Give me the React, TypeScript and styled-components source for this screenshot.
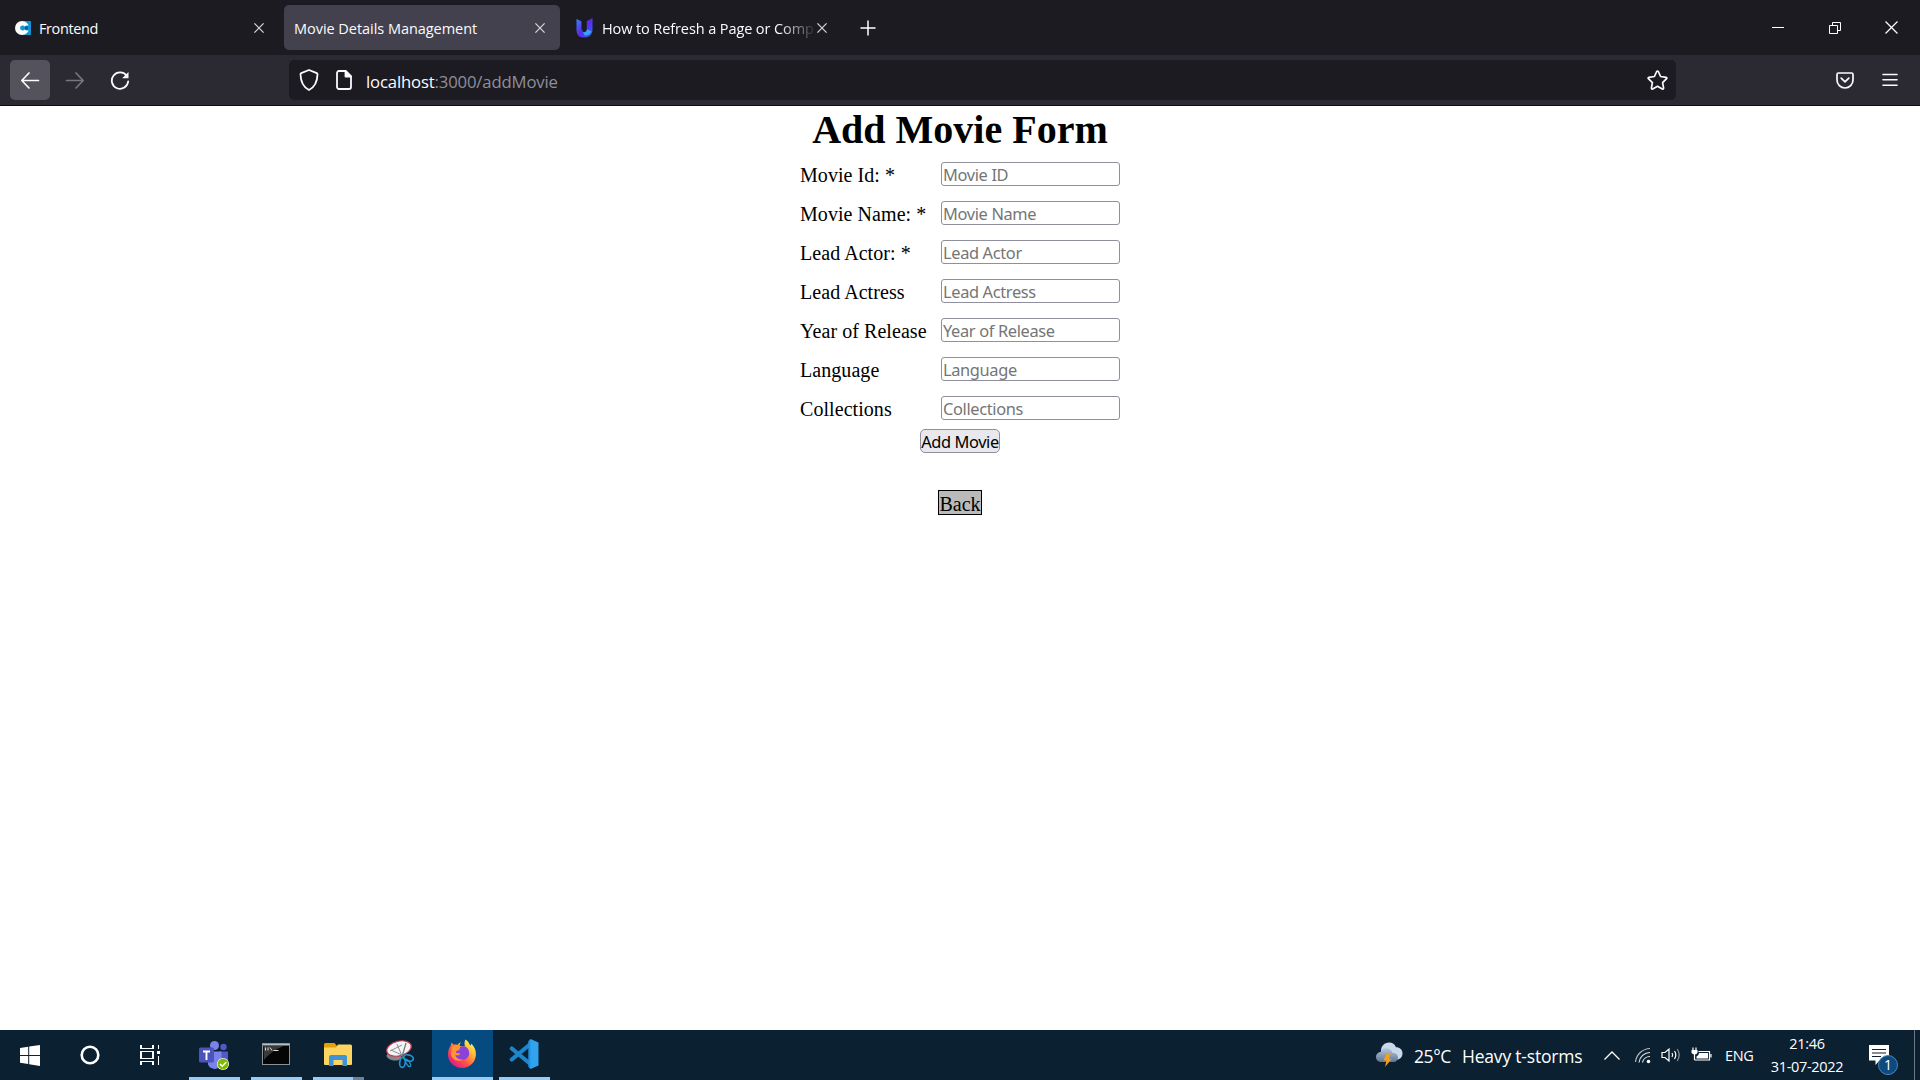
import React from 'react';
import styled, { createGlobalStyle } from 'styled-components';

const UI = `"Open Sans", "Noto Sans", sans-serif`;

const GlobalStyle = createGlobalStyle`
  *, *::before, *::after { box-sizing: border-box; }
  body { margin: 0; background: #fff; overflow: hidden; }
  svg { display: block; flex: none; }
`;

const Screen = styled.div`
  width: 1920px;
  height: 1080px;
  display: flex;
  flex-direction: column;
  overflow: hidden;
  background: #fff;
`;

/* ---------- browser chrome ---------- */

const TabStrip = styled.header`
  height: 55px;
  flex: none;
  display: flex;
  align-items: flex-start;
  gap: 8px;
  padding: 5px 0 0 8px;
  background: #1c1b22;
  color: #fbfbfe;
`;

const Tab = styled.div<{ $active?: boolean; $width: number; $left: number; $right: number }>`
  width: ${p => p.$width}px;
  height: 45px;
  flex: none;
  display: flex;
  align-items: center;
  padding: 0 ${p => p.$right}px 0 ${p => p.$left}px;
  border-radius: 5px;
  background: ${p => (p.$active ? '#42414d' : 'transparent')};
`;

const TabTitle = styled.span<{ $fade?: boolean; $gap?: number; $spacing: number }>`
  flex: 1;
  min-width: 0;
  margin-left: ${p => p.$gap ?? 0}px;
  padding-top: 3px;
  white-space: nowrap;
  font: 14.5px/24px ${UI};
  letter-spacing: ${p => p.$spacing}px;
  ${p => p.$fade && 'mask-image: linear-gradient(to left, transparent, #000 38px);'}
`;

const NewTab = styled.div`
  width: 40px;
  height: 45px;
  margin-left: 4px;
  display: grid;
  place-items: center;
`;

const WindowButtons = styled.div`
  margin-left: auto;
  height: 45px;
  display: grid;
  grid-template-columns: repeat(3, 57px);
  place-items: center;
`;

const NavBar = styled.nav`
  height: 51px;
  flex: none;
  display: flex;
  align-items: center;
  padding: 0 10px;
  background: #2b2a33;
  border-bottom: 1px solid #0c0c0d;
  color: #fbfbfe;
`;

const NavButton = styled.div<{ $raised?: boolean; $dim?: boolean }>`
  width: 40px;
  height: 40px;
  margin-right: 5px;
  display: grid;
  place-items: center;
  border-radius: 5px;
  background: ${p => (p.$raised ? '#53525d' : 'transparent')};
  color: ${p => (p.$dim ? '#77767f' : '#fbfbfe')};
`;

const AddressBar = styled.div`
  width: 1387px;
  height: 40px;
  margin-left: 144px;
  display: flex;
  align-items: center;
  padding: 0 8px 0 10px;
  border-radius: 5px;
  background: #1c1b22;
`;

const Url = styled.span`
  flex: 1;
  margin-left: 14px;
  padding-top: 3px;
  font: 16.7px/26px ${UI};
  letter-spacing: -0.15px;
  color: #fbfbfe;
`;

const UrlRest = styled.span`
  color: #8f8f9a;
`;

const NavTools = styled.div`
  margin-left: auto;
  display: flex;
  margin-right: -5px;
`;

/* ---------- page ---------- */

const Page = styled.main`
  flex: 1;
  display: flex;
  flex-direction: column;
  align-items: center;
  font: 20px/23px "Liberation Serif", "Times New Roman", serif;
  color: #000;
`;

const Heading = styled.h1`
  margin: 1px 0 9px;
  font-size: 40px;
  line-height: 45px;
  font-weight: 700;
`;

const Form = styled.form`
  display: flex;
  flex-direction: column;
  align-items: center;
`;

const Fields = styled.div`
  display: grid;
  grid-template-columns: 141px 179px;
  grid-auto-rows: 39px;
`;

const Label = styled.label`
  padding-top: 3px;
  letter-spacing: 0.06px;
`;

const Input = styled.input`
  width: 179px;
  height: 24px;
  margin: 1px 0 0;
  padding: 1px 1px 0;
  border: 1px solid #8f8f9d;
  border-radius: 3px;
  background: #fff;
  font: 16.4px/20px "Noto Sans", sans-serif;
  letter-spacing: -0.35px;
  outline: none;
  &::placeholder { color: #757575; opacity: 1; }
`;

const Submit = styled.button`
  width: 80px;
  height: 24px;
  margin: -5px 0 0;
  padding: 1px 0 0;
  border: 1px solid #8f8f9d;
  border-radius: 5px;
  background: #e9e9ed;
  color: #000;
  font: 16.4px/20px "Noto Sans", sans-serif;
  letter-spacing: -0.4px;
  white-space: nowrap;
`;

const BackLink = styled.a`
  width: 44px;
  height: 25px;
  margin-top: 37px;
  border: 1px solid #000;
  background: #bababa;
  text-align: center;
  line-height: 26px;
`;

/* ---------- taskbar ---------- */

const Taskbar = styled.footer`
  height: 50px;
  flex: none;
  display: flex;
  background: #0b2031;
  color: #fff;
  font: 15px/20px ${UI};
`;

const SystemItem = styled.div`
  width: 60px;
  display: grid;
  place-items: center;
`;

const Apps = styled.div`
  display: flex;
  margin-left: 3px;
`;

const AppItem = styled.div<{ $active?: boolean }>`
  width: 62px;
  display: flex;
  flex-direction: column;
  align-items: center;
  justify-content: space-between;
  padding-top: 8px;
  background: ${p => (p.$active ? 'linear-gradient(90deg, transparent 1px, #064b80 1px)' : 'transparent')};
`;

const Underline = styled.div<{ $kind: 'none' | 'open' | 'stacked' | 'active' }>`
  width: ${p => (p.$kind === 'active' ? 61 : 51)}px;
  height: 3px;
  align-self: ${p => (p.$kind === 'active' ? 'flex-end' : 'center')};
  background: ${p =>
    p.$kind === 'none'
      ? 'transparent'
      : p.$kind === 'stacked'
        ? 'linear-gradient(90deg, #9accf3 40px, #6b8398 40px)'
        : '#9accf3'};
`;

const Tray = styled.div`
  margin-left: auto;
  display: flex;
  align-items: center;
`;

const Weather = styled.div`
  display: flex;
  align-items: center;
  width: 228px;
  font-size: 17.5px;
  line-height: 24px;
  white-space: nowrap;
`;

const Temperature = styled.span`
  width: 48px;
  margin-left: 11px;
  padding-top: 2px;
  letter-spacing: -0.4px;
`;

const Conditions = styled.span`
  padding-top: 2px;
  letter-spacing: -0.2px;
`;

const TrayIcons = styled.div`
  display: flex;
  align-items: center;
  gap: 10px;
`;

const Overflow = styled.div`
  margin-right: 4px;
`;

const Lang = styled.span`
  width: 30px;
  margin-left: 13px;
  padding-top: 1px;
  font-size: 14.5px;
  letter-spacing: -0.3px;
`;

const Clock = styled.div`
  width: 78px;
  margin-left: 13px;
  margin-right: 1px;
  display: flex;
  flex-direction: column;
  align-items: center;
  gap: 3px;
  font-size: 14.5px;
  letter-spacing: -0.3px;
  white-space: nowrap;
`;

const Notifications = styled.div`
  position: relative;
  margin-left: 22px;
  width: 45px;
  height: 50px;
  padding-top: 15px;
`;

const Badge = styled.span`
  position: absolute;
  left: 9px;
  top: 25px;
  width: 20px;
  height: 20px;
  border-radius: 50%;
  border: 1px solid #4f86b3;
  background: #0c4a80;
  text-align: center;
  font-size: 14px;
  line-height: 18px;
`;

const ShowDesktop = styled.div`
  width: 6px;
  height: 50px;
  border-left: 1px solid #6b7883;
`;

/* ---------- icons ---------- */

const Cross = ({ size = 10, color = '#d9d9de' }: { size?: number; color?: string }) => (
  <svg width={size} height={size} viewBox="0 0 10 10" stroke={color} strokeWidth={12 / size} fill="none">
    <path d="M.4.4l9.2 9.2M9.6.4L.4 9.6" />
  </svg>
);

const FrontendIcon = () => (
  <svg width="16" height="14" viewBox="0 0 16 14">
    <rect x="8" width="8" height="14" rx="1" fill="#1296d4" />
    <circle cx="7" cy="7" r="7" fill="#fff" />
    <path d="M14 4.600H7.500a2.400 2.400 0 0 0 0 4.800H14z" fill="#1296d4" />
    <path d="M10 5.500h3v3h-3z" fill="#0c5f92" />
    <path d="M10.200 2l1.800 1.600-2.200 1.800L8 4zM10.200 12l1.800-1.600-2.200-1.800L8 10z" fill="#fff" />
  </svg>
);

const UpmostlyIcon = () => (
  <svg width="17" height="20" viewBox="0 0 17 20">
    <defs>
      <linearGradient id="uGrad" x1="0" y1="0" x2="1" y2="1">
        <stop offset="0" stopColor="#3a86f8" />
        <stop offset=".5" stopColor="#5a2bea" />
        <stop offset="1" stopColor="#2a6bf2" />
      </linearGradient>
    </defs>
    <path d="M.5 1l5 2.2v8c0 2 .9 3 2.400 3s2.900-1 2.900-3v-8L16.500 0v11.500c0 5-3 8-8.500 8S.5 16.500.5 11.500z" fill="url(#uGrad)" />
    <path d="M5.500 11c0 2.200 1 3.300 2.500 3.300s2.800-1 3-3l4.500 2c-1 3.300-4 4.500-7 4z" fill="#35a4f4" />
  </svg>
);

const ArrowIcon = ({ flip }: { flip?: boolean }) => (
  <svg width="20" height="20" viewBox="0 0 20 20" fill="none" stroke="currentColor" strokeWidth="1.7"
    strokeLinecap="round" strokeLinejoin="round" transform={flip ? 'scale(-1 1)' : undefined}>
    <path d="M18.500 10.500H2M9 3L1.800 10.500 9 18" />
  </svg>
);

const ReloadIcon = () => (
  <svg width="20" height="20" viewBox="0 0 20 20" fill="none" stroke="currentColor" strokeWidth="1.8" strokeLinecap="round">
    <path d="M16.800 6A8.200 8.200 0 1 0 18.200 11.300" />
    <path d="M18.500 2v6.300h-6.300z" fill="currentColor" stroke="none" />
  </svg>
);

const ShieldIcon = () => (
  <svg width="20" height="22" viewBox="0 0 20 22" fill="none" stroke="currentColor" strokeWidth="1.800" strokeLinejoin="round">
    <path d="M10 1l7.800 3.200c.5.200.7.500.7 1C18.300 13 15.500 18.200 10 21 4.500 18.200 1.700 13 1.500 5.200c0-.5.200-.8.700-1z" />
  </svg>
);

const PageIcon = () => (
  <svg width="16" height="20" viewBox="0 0 16 20" fill="none" stroke="currentColor" strokeWidth="1.800" strokeLinejoin="round">
    <path d="M3 1h6.500L15 6.500V17a2 2 0 0 1-2 2H3a2 2 0 0 1-2-2V3a2 2 0 0 1 2-2z" />
    <path d="M9.500 1v5.500H15z" fill="currentColor" />
  </svg>
);

const StarIcon = () => (
  <svg width="21" height="20" viewBox="0 0 21 20" fill="none" stroke="currentColor" strokeWidth="1.700" strokeLinejoin="round">
    <path d="M9.700 1.500q.8-1 1.600 0l2.300 5 5.500.8q1.200.4.500 1.400l-4 4 1 5.500q-.2 1.200-1.300.8l-4.800-2.700-4.800 2.700q-1.100.4-1.300-.8l1-5.500-4-4q-.7-1 .5-1.400l5.500-.8z" />
  </svg>
);

const PocketIcon = () => (
  <svg width="18" height="17" viewBox="0 0 18 17" fill="none" stroke="currentColor" strokeWidth="1.700" strokeLinecap="round" strokeLinejoin="round">
    <path d="M2.500 1h13A1.500 1.500 0 0 1 17 2.500V8A8 8 0 0 1 1 8V2.500A1.500 1.500 0 0 1 2.500 1z" />
    <path d="M5.200 6.200L9 9.800l3.800-3.600" />
  </svg>
);

const MenuIcon = () => (
  <svg width="16" height="14" viewBox="0 0 16 14" stroke="currentColor" strokeWidth="1.600" strokeLinecap="round">
    <path d="M1 1.500h14M1 6.800h14M1 12.200h14" />
  </svg>
);

const StartIcon = () => (
  <svg width="20" height="21" viewBox="0 0 20 21" fill="#fff">
    <path d="M0 3l8.200-1.200v8.100H0zM9.200 1.600L20 0v9.900H9.200zM0 10.900h8.200V19L0 17.800zM9.200 10.900H20V21L9.200 19.200z" />
  </svg>
);

const CortanaIcon = () => (
  <svg width="20" height="20" viewBox="0 0 20 20">
    <circle cx="10" cy="10" r="8.300" fill="none" stroke="#fff" strokeWidth="2.600" />
  </svg>
);

const TaskViewIcon = () => (
  <svg width="20" height="20" viewBox="0 0 20 20" fill="none" stroke="#fff" strokeWidth="1.300" shapeRendering="crispEdges">
    <path d="M1 0v3.500h12V0M1 20v-3.500h12V20M1 6.500h12v7H1zM18.500 0v4M18.500 11v9" />
    <rect x="17" y="6" width="3" height="3" fill="#fff" stroke="none" />
  </svg>
);

const TeamsIcon = () => (
  <svg width="32" height="32" viewBox="0 0 32 32">
    <circle cx="25.500" cy="9" r="3.200" fill="#5059c9" />
    <circle cx="16.500" cy="7.500" r="4.500" fill="#7b83eb" />
    <path d="M21 13.500h9v8.500a6 6 0 0 1-9 4z" fill="#5059c9" />
    <path d="M10 13.500h13.500v10a7 7 0 0 1-13.500 3z" fill="#7b83eb" />
    <rect x="1" y="9.500" width="15" height="15" rx="1.500" fill="#4b53bc" />
    <path d="M5 13.500h7M8.500 13.500v8.500" stroke="#fff" strokeWidth="1.900" />
    <circle cx="25" cy="26" r="6" fill="#fff" />
    <circle cx="25" cy="26" r="5.400" fill="#7fba00" />
    <path d="M22 26l2.200 2.200 4-4" fill="none" stroke="#fff" strokeWidth="1.500" />
  </svg>
);

const TerminalIcon = () => (
  <svg width="30" height="32" viewBox="0 0 30 32">
    <rect x="1.500" y="5.500" width="27" height="21" fill="#050505" stroke="#8c9296" />
    <path d="M2 6h26v1.500H2z" fill="#b9bdc0" />
    <path d="M2.500 8h20Q10 13 3 22z" fill="#3a3a3a" />
    <path d="M4.500 9.500v3M7 9.500v3M9 9.500l2 3M12.500 12.500h5" stroke="#ddd" strokeWidth="1" />
  </svg>
);

const FolderIcon = () => (
  <svg width="30" height="32" viewBox="0 0 30 32">
    <path d="M1 6.500Q1 5 2.500 5h9l2.500 3H28v6H1z" fill="#e3a008" />
    <path d="M1 9.500h12l2-3h12.500q1.500 0 1.500 1.500V26q0 1-1 1H2q-1 0-1-1z" fill="#fcd462" />
    <path d="M6 28V19q0-2 2-2h14q2 0 2 2v9h-4.500v-6h-9v6z" fill="#3d94d6" />
  </svg>
);

const SnipIcon = () => (
  <svg width="30" height="32" viewBox="0 0 30 32" fill="none">
    <ellipse cx="9" cy="18.500" rx="7.500" ry="4" fill="#85888c" transform="rotate(8 9 18.500)" />
    <ellipse cx="14" cy="10.500" rx="12.500" ry="7.300" fill="#f5f5f5" stroke="#c5384b" strokeWidth="1.200" transform="rotate(-14 14 10.500)" />
    <path d="M12 6l5 12M5 13l12-6M6 12l12 5.500" stroke="#8b9096" strokeWidth="1" />
    <path d="M21 5l-4 14" stroke="#6f757b" strokeWidth="1.200" />
    <ellipse cx="23.500" cy="20" rx="5" ry="3" stroke="#2292d0" strokeWidth="1.700" transform="rotate(15 23.500 20)" />
    <ellipse cx="17.500" cy="24.500" rx="2.800" ry="5" stroke="#2292d0" strokeWidth="1.700" transform="rotate(8 17.500 24.500)" />
    <ellipse cx="23" cy="25" rx="1.700" ry="4" stroke="#2292d0" strokeWidth="1.300" transform="rotate(-32 23 25)" />
  </svg>
);

const FirefoxIcon = () => (
  <svg width="30" height="32" viewBox="0 0 30 32">
    <defs>
      <linearGradient id="fxBody" x1=".85" y1=".1" x2=".15" y2=".9">
        <stop offset="0" stopColor="#fff44f" />
        <stop offset=".35" stopColor="#ffa436" />
        <stop offset=".65" stopColor="#ff4f4b" />
        <stop offset="1" stopColor="#e31587" />
      </linearGradient>
    </defs>
    <path d="M18.500 1.500c3 2 4 4 4.500 6 1-.2 1.300-1 1.200-2 3.300 3 5 7 4.700 11.500C28.300 24.500 22.500 30 15 30S1 24.500 1 16.500c0-3.500 1-6.500 2.700-8.700.1-1.200.5-2.600 1.200-3.600.3 1 .8 1.800 1.800 2.400 1.300-.3 2.600-.2 3.800.3.900-1.300 2-2 3.500-2.400-1.200 1.400-1.500 2.500-1.300 3.600l5.300.4c-.8-2.500-.7-5 .5-7z" fill="url(#fxBody)" />
    <path d="M13 9c4.500-2 9 .8 9.200 6 .2 4-3 7-7 7-4 0-6.500-2.500-6.800-5.500 1.500.8 3.500.7 5-.6-1.600-.7-3-1.200-4.600-1.200 0-1.500 1.600-2 3.800-3z" fill="#8b42d6" />
    <path d="M5 9c3-1 5-1 7.500 1 0 1.800-2 1.800-3.200 3-1 .9-.5 2 .5 2.300l3.500.5c-1.500 2-3.500 1.800-5 1 .5 3.500 4.500 5.500 8 4.500-6 4-12.300-.5-12.300-6z" fill="#ff9530" />
  </svg>
);

const CodeIcon = () => (
  <svg width="30" height="32" viewBox="0 0 30 32">
    <path d="M2.800 10.500L22 26.500M2.800 21.500L22 5.500" stroke="#1c86cc" strokeWidth="4.200" strokeLinecap="round" />
    <path d="M21.500 1L29.500 4.500v23L21.500 31l-1-1.500V2.500z" fill="#31a3ee" />
    <path d="M21.500 1v30L19.300 28.800V3.200z" fill="#2391dd" />
  </svg>
);

const StormIcon = () => (
  <svg width="27" height="26" viewBox="0 0 27 26">
    <defs>
      <linearGradient id="cloud" x1="0" y1="0" x2="0" y2="1">
        <stop offset="0" stopColor="#b4c7df" />
        <stop offset="1" stopColor="#62778f" />
      </linearGradient>
    </defs>
    <path d="M5 9C5 4 8.500.5 13 .5c3.500 0 6 2 7 4.700 4 0 6.500 2.500 6.500 6.200 0 3.600-2.500 6.100-6 6.100H9z" fill="#c9d8ea" />
    <path d="M5.500 20A5 5 0 0 1 4.500 10C6 6.500 9 5.500 12 6.500c2.500.7 4 2.500 4.500 4.500 3.500 0 5.500 2 5.500 4.500S20 20 17.500 20z" fill="url(#cloud)" />
    <path d="M10.500 12h4l-1.500 5h2.500L9 25l1.500-6.500H7.500z" fill="#f9a01b" />
  </svg>
);

const ChevronIcon = () => (
  <svg width="16" height="9" viewBox="0 0 16 9" fill="none" stroke="#fff" strokeWidth="1.300">
    <path d="M.5 8.500L8 1l7.500 7.500" />
  </svg>
);

const WifiIcon = () => (
  <svg width="17" height="17" viewBox="0 0 17 17" fill="none" stroke="#dfe4e8" strokeWidth="1.200">
    <path d="M1.500 15A15 15 0 0 1 16 1.500" opacity=".8" />
    <path d="M5 15.500A11 11 0 0 1 16 5.500M8.500 15.500A7.500 7.500 0 0 1 16 9.500" />
    <circle cx="14.500" cy="14.500" r="1.800" fill="#fff" stroke="none" />
  </svg>
);

const VolumeIcon = () => (
  <svg width="20" height="16" viewBox="0 0 20 16" fill="none" stroke="#fff" strokeWidth="1.200">
    <path d="M1 5.500h3L8 2v12l-4-3.500H1zM11 6q1.300 2 0 4M13.500 4q2.600 4 0 8" />
    <path d="M16.200 2q4 6 0 12" opacity=".5" />
  </svg>
);

const BatteryIcon = () => (
  <svg width="21" height="16" viewBox="0 0 21 16" fill="none" stroke="#fff" strokeWidth="1.200">
    <path d="M2 .5v3M5 .5v3M3.500 7v6" />
    <path d="M.5 3h6v2.500q-.5 2-3 2t-3-2z" fill="#fff" stroke="none" />
    <path d="M7.500 4.500H18.500v8.500H3.500M20 7v3.500" />
    <path d="M8 6h9v5.500H5.500V9.500Q8 8.500 8 6z" fill="#fff" stroke="none" />
  </svg>
);

const MessageIcon = () => (
  <svg width="20" height="21" viewBox="0 0 20 21">
    <path d="M0 0h20v15.500h-9.500L6.500 20v-4.500H0z" fill="#fff" />
    <path d="M3 4.500h14M3 8h14M3 11.500h9" stroke="#0b2031" strokeWidth="1.200" />
  </svg>
);

/* ---------- content ---------- */

const fields = [
  ['Movie Id: *', 'Movie ID'],
  ['Movie Name: *', 'Movie Name'],
  ['Lead Actor: *', 'Lead Actor'],
  ['Lead Actress', 'Lead Actress'],
  ['Year of Release', 'Year of Release'],
  ['Language', 'Language'],
  ['Collections', 'Collections'],
];

type Kind = 'none' | 'open' | 'stacked' | 'active';
const apps: { icon: React.ReactNode; kind: Kind }[] = [
  { icon: <TeamsIcon />, kind: 'open' },
  { icon: <TerminalIcon />, kind: 'open' },
  { icon: <FolderIcon />, kind: 'stacked' },
  { icon: <SnipIcon />, kind: 'none' },
  { icon: <FirefoxIcon />, kind: 'active' },
  { icon: <CodeIcon />, kind: 'open' },
];

export default function App() {
  return (
    <Screen>
      <GlobalStyle />
      <TabStrip>
        <Tab $width={268} $left={7} $right={12}>
          <FrontendIcon />
          <TabTitle $gap={8} $spacing={-0.4}>Frontend</TabTitle>
          <Cross />
        </Tab>
        <Tab $active $width={276} $left={10} $right={15}>
          <TabTitle $spacing={-0.04}>Movie Details Management</TabTitle>
          <Cross />
        </Tab>
        <Tab $width={268} $left={8} $right={9}>
          <UpmostlyIcon />
          <TabTitle $gap={9} $spacing={-0.1} $fade>How to Refresh a Page or Comp</TabTitle>
          <Cross />
        </Tab>
        <NewTab>
          <svg width="16" height="16" viewBox="0 0 16 16" stroke="#fff" strokeWidth="1.500"><path d="M8 .5v15M.5 8h15" /></svg>
        </NewTab>
        <WindowButtons>
          <svg width="12" height="12" viewBox="0 0 12 12" stroke="#fff"><path d="M0 5.500h12" /></svg>
          <svg width="12" height="12" viewBox="0 0 12 12" fill="none" stroke="#fff"><path d="M.5 3.500h8v8h-8zM3.500 3.500v-3h8v8h-3" /></svg>
          <Cross size={13} color="#fff" />
        </WindowButtons>
      </TabStrip>
      <NavBar>
        <NavButton $raised><ArrowIcon /></NavButton>
        <NavButton $dim><ArrowIcon flip /></NavButton>
        <NavButton><ReloadIcon /></NavButton>
        <AddressBar>
          <ShieldIcon />
          <svg width="17" height="1" />
          <PageIcon />
          <Url>localhost<UrlRest>:3000/addMovie</UrlRest></Url>
          <StarIcon />
        </AddressBar>
        <NavTools>
          <NavButton><PocketIcon /></NavButton>
          <NavButton><MenuIcon /></NavButton>
        </NavTools>
      </NavBar>

      <Page>
        <Heading>Add Movie Form</Heading>
        <Form>
          <Fields>
            {fields.map(([label, hint]) => (
              <React.Fragment key={label}>
                <Label>{label}</Label>
                <Input placeholder={hint} />
              </React.Fragment>
            ))}
          </Fields>
          <Submit type="button">Add Movie</Submit>
        </Form>
        <BackLink>Back</BackLink>
      </Page>

      <Taskbar>
        <SystemItem><StartIcon /></SystemItem>
        <SystemItem><CortanaIcon /></SystemItem>
        <SystemItem><TaskViewIcon /></SystemItem>
        <Apps>
          {apps.map(({ icon, kind }, i) => (
            <AppItem key={i} $active={kind === 'active'}>
              {icon}
              <Underline $kind={kind} />
            </AppItem>
          ))}
        </Apps>
        <Tray>
          <Weather>
            <StormIcon />
            <Temperature>25°C</Temperature>
            <Conditions>Heavy t-storms</Conditions>
          </Weather>
          <TrayIcons>
            <Overflow><ChevronIcon /></Overflow>
            <WifiIcon />
            <VolumeIcon />
            <BatteryIcon />
          </TrayIcons>
          <Lang>ENG</Lang>
          <Clock>
            <span>21:46</span>
            <span>31-07-2022</span>
          </Clock>
          <Notifications>
            <MessageIcon />
            <Badge>1</Badge>
          </Notifications>
          <ShowDesktop />
        </Tray>
      </Taskbar>
    </Screen>
  );
}
